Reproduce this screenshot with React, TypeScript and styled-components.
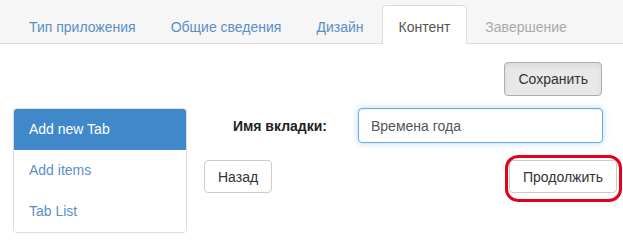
import React from "react";
import styled, { createGlobalStyle } from "styled-components";

const GlobalStyle = createGlobalStyle`
  html, body {
    margin: 0;
    padding: 0;
    background: #fff;
  }
  body {
    font-family: "Liberation Sans", Arial, sans-serif;
    font-size: 14px;
    line-height: 20px;
    color: #333;
  }
  * { box-sizing: border-box; }
`;

const Page = styled.div`
  width: 623px;
  height: 249px;
  overflow: hidden;
`;

const NavBar = styled.nav`
  display: flex;
  align-items: flex-end;
  height: 44px;
  padding-left: 12px;
  background: #f6f6f6;
  border-bottom: 1px solid #ddd;
`;

const Tab = styled.a<{ $active?: boolean; $disabled?: boolean }>`
  display: block;
  margin-right: 1px;
  margin-bottom: -1px;
  padding: 11px 16px 7px;
  border: 1px solid transparent;
  border-bottom: 0;
  border-radius: 4px 4px 0 0;
  color: ${(p) => (p.$active ? "#555" : p.$disabled ? "#aaa" : "#5a8fc6")};
  background: ${(p) => (p.$active ? "#fff" : "transparent")};
  border-color: ${(p) => (p.$active ? "#ddd" : "transparent")};
  text-decoration: none;
  white-space: nowrap;
`;

const Toolbar = styled.div`
  display: flex;
  justify-content: flex-end;
  padding: 18px 21px 0 0;
`;

const Button = styled.button<{ $pressed?: boolean }>`
  height: ${(p) => (p.$pressed ? "34px" : "33px")};
  padding: 0 13px;
  font: inherit;
  color: #333;
  background: ${(p) => (p.$pressed ? "#e8e8e8" : "#fff")};
  border: 1px solid ${(p) => (p.$pressed ? "#adadad" : "#ccc")};
  border-radius: 4px;
  box-shadow: ${(p) => (p.$pressed ? "inset 0 3px 5px rgba(0,0,0,0.06)" : "none")};
  cursor: pointer;
`;

const Main = styled.div`
  display: grid;
  grid-template-columns: 174px 1fr;
  column-gap: 17px;
  padding: 12px 20px 0 13px;
`;

const ListGroup = styled.div`
  display: flex;
  flex-direction: column;
  border: 1px solid #ddd;
  border-radius: 4px;
  overflow: hidden;
`;

const ListItem = styled.a<{ $active?: boolean }>`
  display: block;
  height: ${(p) => (p.$active ? "42px" : "41px")};
  padding: ${(p) => (p.$active ? "11px" : "10px")} 15px 10px;
  margin-top: ${(p) => (p.$active ? "-1px" : "0")};
  color: ${(p) => (p.$active ? "#fff" : "#5a8fc6")};
  background: ${(p) => (p.$active ? "#3f88c9" : "#fff")};
  text-decoration: none;
`;

const Content = styled.div`
  display: flex;
  flex-direction: column;
`;

const FormRow = styled.div`
  display: grid;
  grid-template-columns: 138px 1fr;
  column-gap: 16px;
  align-items: center;
`;

const Label = styled.label`
  padding-right: 15px;
  text-align: right;
  font-weight: bold;
  color: #222;
`;

const Input = styled.input`
  height: 35px;
  padding: 0 12px;
  font: inherit;
  color: #555;
  caret-color: #333;
  border: 1px solid #66afe9;
  border-radius: 4px;
  outline: none;
  box-shadow: inset 0 1px 1px rgba(0,0,0,0.075), 0 0 6px rgba(102,175,233,0.5);
`;

const ButtonRow = styled.div`
  display: flex;
  justify-content: space-between;
  margin: 17px -14px 0 0;
`;

const Marked = styled.span`
  position: relative;
  display: inline-flex;
`;

const Highlight = styled.span`
  position: absolute;
  top: -5px;
  left: -4px;
  right: -5px;
  bottom: -9px;
  border: 3px solid #e2001a;
  border-radius: 13px;
  pointer-events: none;
`;

export default function App() {
  return (
    <Page>
      <GlobalStyle />
      <NavBar>
        <Tab>Тип приложения</Tab>
        <Tab>Общие сведения</Tab>
        <Tab>Дизайн</Tab>
        <Tab $active>Контент</Tab>
        <Tab $disabled>Завершение</Tab>
      </NavBar>
      <Toolbar>
        <Button $pressed>Сохранить</Button>
      </Toolbar>
      <Main>
        <ListGroup>
          <ListItem $active>Add new Tab</ListItem>
          <ListItem>Add items</ListItem>
          <ListItem>Tab List</ListItem>
        </ListGroup>
        <Content>
          <FormRow>
            <Label>Имя вкладки:</Label>
            <Input defaultValue="Времена года" autoFocus />
          </FormRow>
          <ButtonRow>
            <Button>Назад</Button>
            <Marked>
              <Button>Продолжить</Button>
              <Highlight />
            </Marked>
          </ButtonRow>
        </Content>
      </Main>
    </Page>
  );
}
